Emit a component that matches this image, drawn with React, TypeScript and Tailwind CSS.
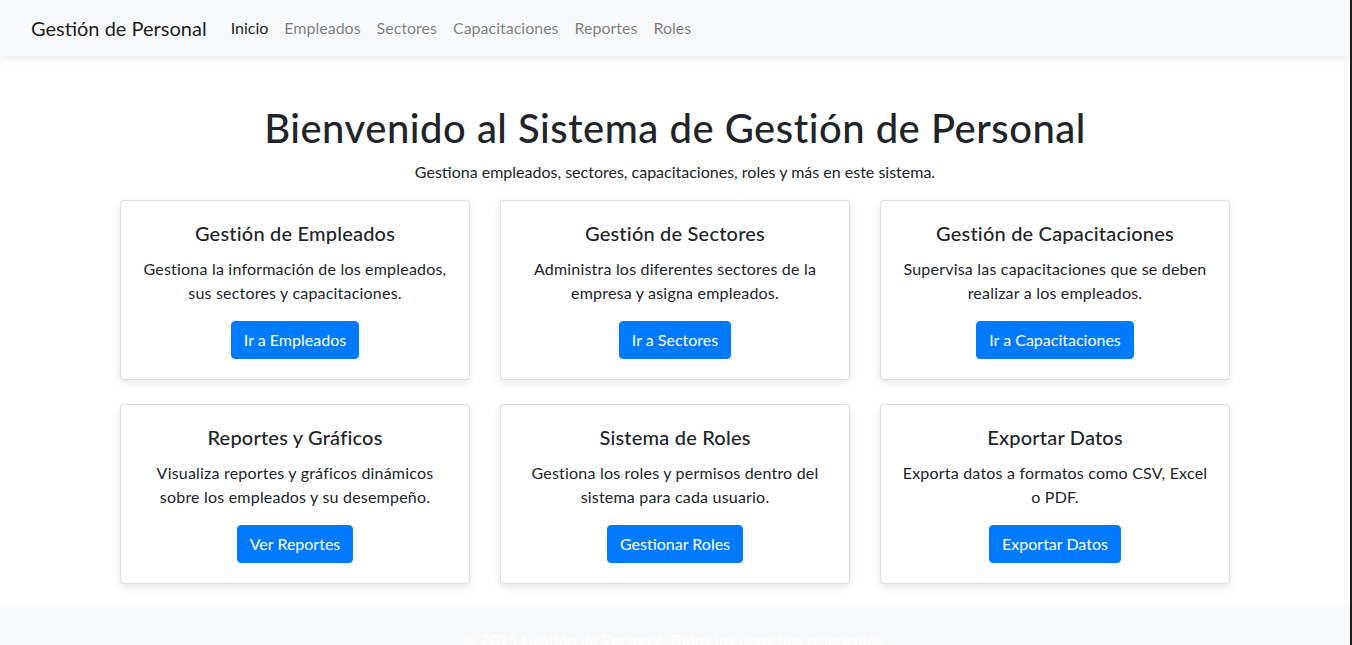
const navLinks = ['Inicio', 'Empleados', 'Sectores', 'Capacitaciones', 'Reportes', 'Roles'];

const cards = [
  {
    title: 'Gestión de Empleados',
    text: 'Gestiona la información de los empleados, sus sectores y capacitaciones.',
    button: 'Ir a Empleados',
  },
  {
    title: 'Gestión de Sectores',
    text: 'Administra los diferentes sectores de la empresa y asigna empleados.',
    button: 'Ir a Sectores',
  },
  {
    title: 'Gestión de Capacitaciones',
    text: 'Supervisa las capacitaciones que se deben realizar a los empleados.',
    button: 'Ir a Capacitaciones',
  },
  {
    title: 'Reportes y Gráficos',
    text: 'Visualiza reportes y gráficos dinámicos sobre los empleados y su desempeño.',
    button: 'Ver Reportes',
  },
  {
    title: 'Sistema de Roles',
    text: 'Gestiona los roles y permisos dentro del sistema para cada usuario.',
    button: 'Gestionar Roles',
  },
  {
    title: 'Exportar Datos',
    text: 'Exporta datos a formatos como CSV, Excel o PDF.',
    button: 'Exportar Datos',
  },
];

export default function App() {
  return (
    <div className="h-screen overflow-hidden flex flex-col bg-white text-[#212529] font-['Lato',sans-serif] text-[16px] leading-6 border-r-2 border-[#1e1e1e]">
      {/* Navbar */}
      <nav className="relative z-10 h-14 shrink-0 flex items-center px-[31px] bg-[#f8f9fa] shadow-[0_3px_8px_rgba(0,0,0,0.09)]">
        <span className="text-[20px] leading-[30px] text-black/90 mr-4">Gestión de Personal</span>
        <ul className="flex">
          {navLinks.map((link, i) => (
            <li key={link}>
              <a className={`block px-2 py-2 ${i === 0 ? 'text-black/90' : 'text-black/50'}`}>{link}</a>
            </li>
          ))}
        </ul>
      </nav>

      {/* Main */}
      <main className="w-[1140px] mx-auto px-[15px] pt-12 shrink-0">
        <h1 className="text-[40px] leading-[48px] font-medium tracking-[0.5px] text-center mb-2">
          Bienvenido al Sistema de Gestión de Personal
        </h1>
        <p className="text-center mb-4">Gestiona empleados, sectores, capacitaciones, roles y más en este sistema.</p>

        <div className="grid grid-cols-3 gap-x-[30px] gap-y-6">
          {cards.map((card) => (
            <div
              key={card.title}
              className="border border-black/[0.125] rounded bg-white shadow-[0_3px_8px_rgba(0,0,0,0.1)] p-5 text-center"
            >
              <h5 className="text-[20px] leading-6 font-medium tracking-[0.2px] mb-3">{card.title}</h5>
              <p className="mb-4 tracking-[0.2px]">{card.text}</p>
              <button className="bg-[#007bff] text-white rounded px-3 py-[6px] leading-6 border border-[#007bff]">
                {card.button}
              </button>
            </div>
          ))}
        </div>
      </main>

      {/* Footer */}
      <footer className="mt-5 bg-[#f8f9fa] py-6 text-center text-white shrink-0">
        <p>© 2025 Gestión de Personal. Todos los derechos reservados.</p>
      </footer>
    </div>
  );
}
